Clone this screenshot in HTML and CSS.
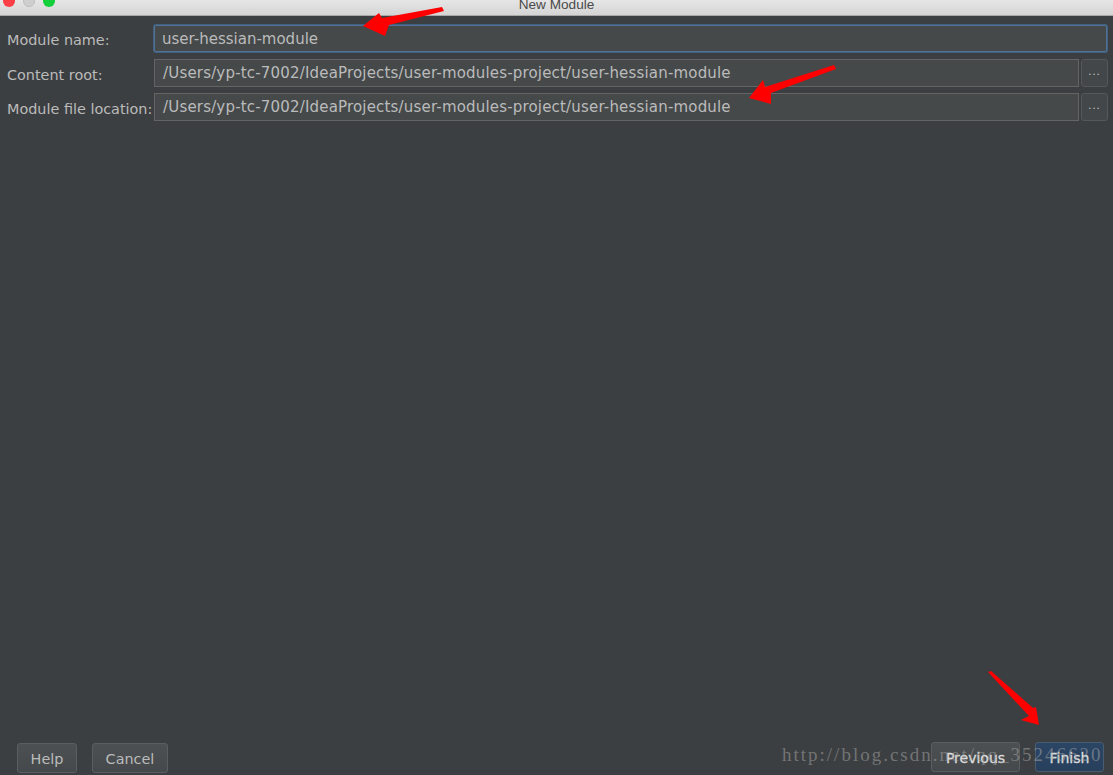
FILE: index.html
```html
<!DOCTYPE html>
<html lang="en">
<head>
<meta charset="utf-8">
<title>New Module</title>
<link rel="stylesheet" href="styles.css">
</head>
<body>
<div class="window">
  <header class="titlebar">
    <div class="lights">
      <span class="light red"></span>
      <span class="light grey"></span>
      <span class="light green"></span>
    </div>
    <div class="title">New Module</div>
  </header>
  <main class="form">
    <div class="row first">
      <label class="label">Module name:</label>
      <div class="field focus">user-hessian-module</div>
    </div>
    <div class="row second">
      <label class="label">Content root:</label>
      <div class="field">/Users/yp-tc-7002/IdeaProjects/user-modules-project/user-hessian-module</div>
      <button class="browse">...</button>
    </div>
    <div class="row third">
      <label class="label">Module file location:</label>
      <div class="field">/Users/yp-tc-7002/IdeaProjects/user-modules-project/user-hessian-module</div>
      <button class="browse">...</button>
    </div>
  </main>
  <footer class="actions">
    <div class="group">
      <button class="btn help">Help</button>
      <button class="btn cancel">Cancel</button>
    </div>
    <div class="group right">
      <button class="btn previous">Previous</button>
      <button class="btn finish">Finish</button>
    </div>
  </footer>
</div>
<div class="watermark">http://blog.csdn.net/qq_35246620</div>
<svg class="arrows" width="1113" height="775" viewBox="0 0 1113 775">
  <path d="M442 7 L444 11 L389 25 L385 36 L363 26 L379 13 L382 18 Z" fill="#fe0000"/>
  <path d="M834 65 L836 69 L771 93 L771 104 L749 98 L763 80 L765 87 Z" fill="#fe0000"/>
  <path d="M988 672 L991 671 L1033 708 L1036 707 L1039 725 L1021 720 L1029 716 Z" fill="#fe0000"/>
</svg>
</body>
</html>
```
FILE: styles.css
```css
html, body {
  margin: 0;
  padding: 0;
  width: 1113px;
  height: 775px;
  overflow: hidden;
  background: #3c3f41;
}
.window {
  width: 1113px;
  height: 775px;
  display: flex;
  flex-direction: column;
  font-family: "DejaVu Sans", sans-serif;
  color: #bbbbbb;
  font-size: 14px;
}
.titlebar {
  height: 15px;
  flex: none;
  position: relative;
  display: flex;
  justify-content: center;
  align-items: center;
  background: linear-gradient(#e6e6e6, #d4d4d4);
  border-bottom: 1px solid #a8a8a8;
}
.lights {
  position: absolute;
  left: 3px;
  top: -5px;
  display: flex;
  gap: 8px;
}
.light {
  width: 12px;
  height: 12px;
  border-radius: 50%;
}
.red { background: #fc3f47; }
.grey { background: #cfcfcf; border: 1px solid #bdbdbd; box-sizing: border-box; }
.green { background: #12cf3a; }
.title {
  font-family: "Liberation Sans", sans-serif;
  font-size: 13.6px;
  color: #4a4a4a;
  line-height: 10px;
  margin-top: -5px;
}
.form {
  flex: 1;
  display: flex;
  flex-direction: column;
  padding: 9px 5px 0 7px;
}
.row {
  display: flex;
  align-items: stretch;
}
.row.first { height: 27px; margin-bottom: 7px; }
.row.second { height: 28px; margin-bottom: 6px; }
.row.third { height: 28px; }
.label {
  width: 147px;
  flex: none;
  display: flex;
  align-items: center;
  padding-top: 3px;
  white-space: nowrap;
  font-size: 14.4px;
}
.field {
  flex: 1;
  display: flex;
  align-items: center;
  background: #45494a;
  border: 1px solid #646464;
  box-sizing: border-box;
  padding: 0 8px;
  white-space: nowrap;
  font-size: 15px;
  letter-spacing: 0.18px;
}
.field.focus {
  border: 1px solid #4f7299;
  box-shadow: 0 0 0 1px #43607e;
  border-radius: 2px;
  margin: 0 1px 0 0;
  padding-left: 7px;
  letter-spacing: 0;
}
.browse {
  width: 27px;
  margin-left: 2px;
  flex: none;
  border: 1px solid #555759;
  border-radius: 3px;
  background: #43474a;
  color: #cccccc;
  font-family: "DejaVu Sans", sans-serif;
  font-size: 10px;
  letter-spacing: 1px;
  padding: 0 0 3px;
}
.actions {
  height: 32px;
  flex: none;
  display: flex;
  justify-content: space-between;
  align-items: flex-start;
  padding: 0 9px 0 17px;
}
.group { display: flex; gap: 15px; }
.group.right { margin-top: -1px; }
.btn {
  height: 30px;
  box-sizing: border-box;
  border: 1px solid #5a5e60;
  border-radius: 3px;
  background: linear-gradient(#4c5052, #45494b);
  color: #bbbbbb;
  font-family: "DejaVu Sans", sans-serif;
  font-size: 14.4px;
  padding: 1px 0 0;
}
.help { width: 60px; }
.cancel { width: 76px; }
.previous {
  width: 89px;
  font-size: 14px;
  color: #dddddd;
  -webkit-text-stroke: 0.3px #dddddd;
}
.finish {
  width: 69px;
  font-size: 14px;
  color: #dddddd;
  -webkit-text-stroke: 0.3px #dddddd;
  background: linear-gradient(#2b4565, #28405c);
  border-color: #4a5c70;
}
.watermark {
  position: absolute;
  left: 782px;
  top: 745px;
  font-family: "Liberation Serif", serif;
  font-size: 19px;
  letter-spacing: 2px;
  line-height: 20px;
  color: rgba(170, 170, 170, 0.5);
  white-space: nowrap;
}
.arrows {
  position: absolute;
  left: 0;
  top: 0;
  pointer-events: none;
}
```
